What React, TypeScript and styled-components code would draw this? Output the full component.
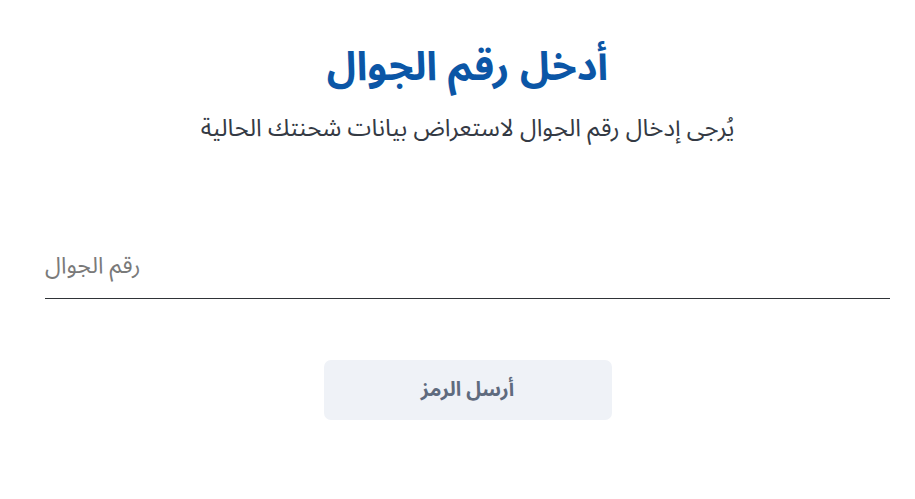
import React from 'react';
import styled, { createGlobalStyle } from 'styled-components';

const GlobalStyle = createGlobalStyle`
  html, body {
    margin: 0;
    padding: 0;
    background: #ffffff;
    font-family: "Noto Sans Arabic", "Noto Kufi Arabic", "Noto Sans", "DejaVu Sans", sans-serif;
  }
`;

const Page = styled.div`
  width: 915px;
  height: 499px;
  box-sizing: border-box;
  padding: 0 25px 0 45px;
  display: flex;
  flex-direction: column;
  align-items: stretch;
`;

const Header = styled.div`
  display: flex;
  flex-direction: column;
  align-items: center;
  padding-top: 36px;
`;

const Title = styled.h1`
  margin: 0;
  font-size: 40px;
  line-height: 64px;
  font-weight: 700;
  color: #0b56a6;
  direction: rtl;
`;

const Subtitle = styled.p`
  margin: 9px 0 0;
  font-size: 24px;
  line-height: 40px;
  color: #343a44;
  direction: rtl;
`;

const Field = styled.label`
  display: flex;
  align-items: flex-end;
  margin-top: 92px;
  height: 39px;
  border-bottom: 1px solid #2f3337;
  padding-bottom: 18px;
`;

const FieldLabel = styled.span`
  font-size: 23px;
  line-height: 28px;
  color: #7a7a7a;
  direction: rtl;
`;

const Actions = styled.div`
  display: flex;
  justify-content: center;
  margin-top: 61px;
`;

const SendButton = styled.button`
  width: 288px;
  height: 60px;
  border: none;
  border-radius: 7px;
  background: #eff2f7;
  color: #5f6b7e;
  font-family: inherit;
  font-size: 20px;
  font-weight: 700;
  direction: rtl;
  cursor: pointer;
`;

export default function App() {
  return (
    <>
      <GlobalStyle />
      <Page>
        <Header>
          <Title>أدخل رقم الجوال</Title>
          <Subtitle>يُرجى إدخال رقم الجوال لاستعراض بيانات شحنتك الحالية</Subtitle>
        </Header>
        <Field>
          <FieldLabel>رقم الجوال</FieldLabel>
        </Field>
        <Actions>
          <SendButton>أرسل الرمز</SendButton>
        </Actions>
      </Page>
    </>
  );
}
